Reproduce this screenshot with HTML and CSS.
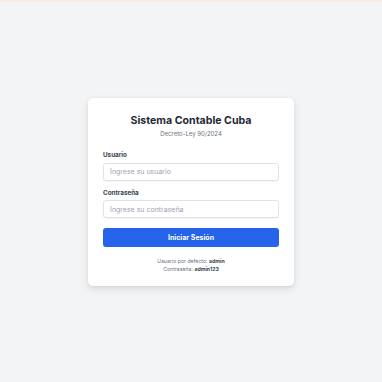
FILE: index.html
```html
<!DOCTYPE html>
<html lang="es">
<head>
<meta charset="utf-8">
<link rel="stylesheet" href="styles.css">
</head>
<body>
<div class="topline"></div>
<main class="page">
  <div class="card">
    <h1 class="title">Sistema Contable Cuba</h1>
    <p class="subtitle">Decreto-Ley 90/2024</p>
    <form class="form">
      <div class="field">
        <label class="label">Usuario</label>
        <input class="input" type="text" placeholder="Ingrese su usuario">
      </div>
      <div class="field">
        <label class="label">Contraseña</label>
        <input class="input" type="password" placeholder="Ingrese su contraseña">
      </div>
      <button class="btn" type="button">Iniciar Sesión</button>
    </form>
    <div class="hint">
      <p>Usuario por defecto: <b>admin</b></p>
      <p>Contraseña: <b>admin123</b></p>
    </div>
  </div>
</main>
</body>
</html>
```
FILE: styles.css
```css
* { box-sizing: border-box; }
html, body { margin: 0; padding: 0; height: 100%; }
body {
  background: #f3f4f6;
  font-family: Inter, "Noto Sans", sans-serif;
  color: #1f2937;
}
.topline {
  height: 2px;
  background: #f7ede6;
}
.page {
  height: calc(100% - 2px);
  display: flex;
  align-items: center;
  justify-content: center;
}
.card {
  width: 206px;
  background: #fff;
  border-radius: 5px;
  box-shadow: 0 3px 8px rgba(0,0,0,0.10), 0 1px 3px rgba(0,0,0,0.06);
  padding: 16px 15px 13px;
}
.title {
  margin: 0;
  text-align: center;
  font-size: 10.6px;
  font-weight: 700;
  color: #1f2937;
  line-height: 14px;
}
.subtitle {
  margin: 1.5px 0 0;
  text-align: center;
  font-size: 6px;
  color: #6b7280;
  line-height: 10px;
}
.form {
  margin-top: 11px;
  display: flex;
  flex-direction: column;
}
.field {
  display: flex;
  flex-direction: column;
  margin-bottom: 7px;
}
.field + .field { margin-bottom: 10px; }
.label {
  font-size: 6.3px;
  font-weight: 700;
  color: #374151;
  line-height: 10px;
  margin-bottom: 2.5px;
}
.input {
  height: 18px;
  border: 1px solid #dfe2e7;
  border-radius: 3px;
  padding: 0 6px;
  font-family: inherit;
  font-size: 7px;
  color: #111827;
  background: #fff;
  box-shadow: 0 1px 1px rgba(0,0,0,0.04);
  outline: none;
}
.input::placeholder { color: #9ca3af; }
.btn {
  height: 19px;
  border: 0;
  border-radius: 3px;
  background: #2563eb;
  color: #fff;
  font-family: inherit;
  font-size: 7px;
  font-weight: 700;
}
.hint {
  margin-top: 10px;
  text-align: center;
  font-size: 5.2px;
  color: #6b7280;
  line-height: 8px;
}
.hint p { margin: 0; }
.hint b { color: #374151; font-weight: 700; }
```
